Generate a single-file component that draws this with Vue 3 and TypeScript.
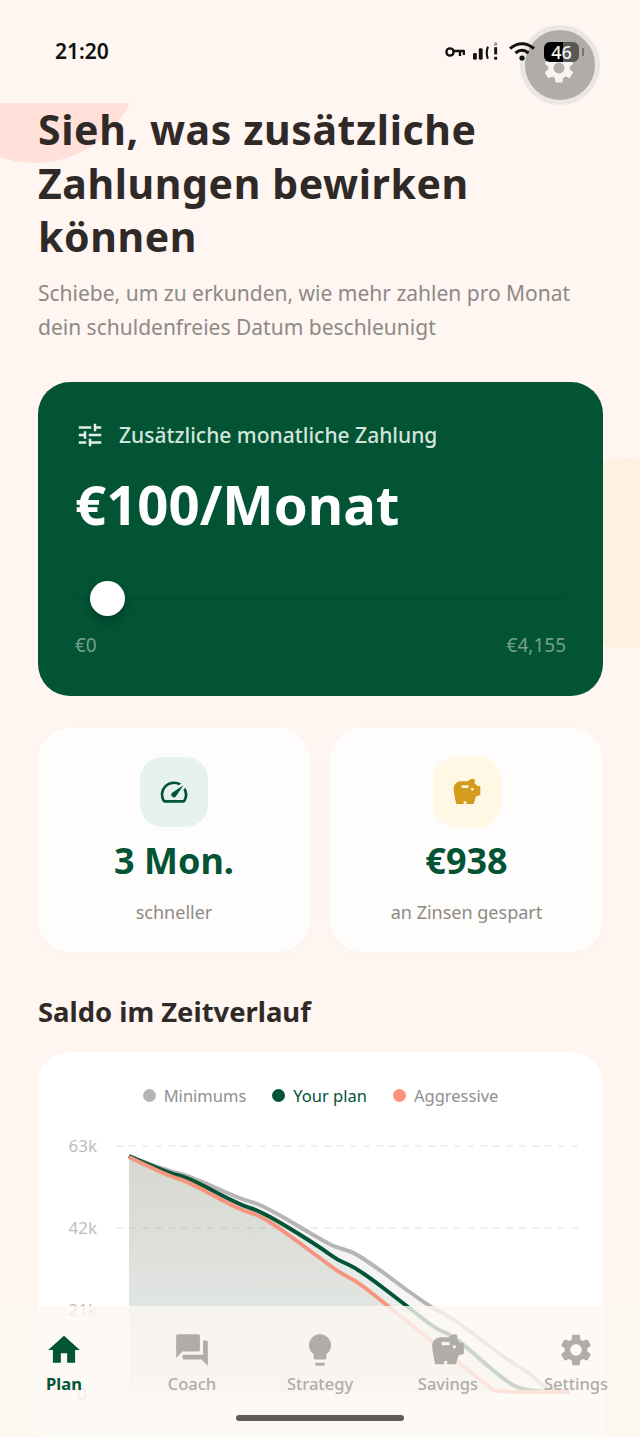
<script setup lang="ts">
type Series = { name: string; color: string; fill: string; points: [number, number][] };

const icons = {
  home: 'M10 20v-6h4v6h5v-8h3L12 3 2 12h3v8z',
  forum: 'M21 6h-2v9H6v2c0 .55.45 1 1 1h11l4 4V7c0-.55-.45-1-1-1zm-4 6V3c0-.55-.45-1-1-1H3c-.55 0-1 .45-1 1v14l4-4h10c.55 0 1-.45 1-1z',
  bulb: 'M9 21c0 .55.45 1 1 1h4c.55 0 1-.45 1-1v-1H9v1zm3-19C8.14 2 5 5.14 5 9c0 2.38 1.19 4.47 3 5.74V17c0 .55.45 1 1 1h6c.55 0 1-.45 1-1v-2.26c1.81-1.27 3-3.36 3-5.74 0-3.86-3.14-7-7-7z',
  piggy: 'M19.83 7.5l-2.27-2.27c.07-.42.18-.81.32-1.15.08-.18.12-.37.12-.58 0-.83-.67-1.5-1.5-1.5-1.64 0-3.09.79-4 2h-5C4.46 4 2 6.46 2 9.5S4 21 4 21h5.5v-2h2v2H17l1.68-5.59 3.32-1.11V7.5h-2.17zM13 9H8V7h5v2zm3 2c-.55 0-1-.45-1-1s.45-1 1-1 1 .45 1 1-.45 1-1 1z',
  gear: 'M19.14 12.94c.04-.3.06-.61.06-.94 0-.32-.02-.64-.07-.94l2.03-1.58c.18-.14.23-.41.12-.61l-1.92-3.32c-.12-.22-.37-.29-.59-.22l-2.39.96c-.5-.38-1.03-.7-1.62-.94l-.36-2.54c-.04-.24-.24-.41-.48-.41h-3.84c-.24 0-.43.17-.47.41l-.36 2.54c-.59.24-1.13.57-1.62.94l-2.39-.96c-.22-.08-.47 0-.59.22L2.74 8.87c-.12.21-.08.47.12.61l2.03 1.58c-.05.3-.09.63-.09.94s.02.64.07.94l-2.03 1.58c-.18.14-.23.41-.12.61l1.92 3.32c.12.22.37.29.59.22l2.39-.96c.5.38 1.03.7 1.62.94l.36 2.54c.05.24.24.41.48.41h3.84c.24 0 .44-.17.47-.41l.36-2.54c.59-.24 1.13-.56 1.62-.94l2.39.96c.22.08.47 0 .59-.22l1.92-3.32c.12-.22.07-.47-.12-.61l-2.01-1.58zM12 15.6c-1.98 0-3.6-1.62-3.6-3.6s1.62-3.6 3.6-3.6 3.6 1.62 3.6 3.6-1.62 3.6-3.6 3.6z',
  speed: 'M20.38 8.57l-1.23 1.85a8 8 0 0 1-.22 7.58H5.07A8 8 0 0 1 15.58 6.85l1.85-1.23A10 10 0 0 0 3.35 19a2 2 0 0 0 1.72 1h13.85a2 2 0 0 0 1.74-1 10 10 0 0 0-.27-10.44zm-9.79 6.84a2 2 0 0 0 2.83 0l5.66-8.49-8.49 5.66a2 2 0 0 0 0 2.83z',
  tune: 'M3 17v2h6v-2H3zM3 5v2h10V5H3zm10 16v-2h8v-2h-8v-2h-2v6h2zM7 9v2H3v2h4v2h2V9H7zm14 4v-2H11v2h10zm-6-4h2V7h4V5h-4V3h-2v6z',
};

const nav = [
  { label: 'Plan', icon: icons.home, active: true },
  { label: 'Coach', icon: icons.forum, active: false },
  { label: 'Strategy', icon: icons.bulb, active: false },
  { label: 'Savings', icon: icons.piggy, active: false },
  { label: 'Settings', icon: icons.gear, active: false },
];

const legend = [
  { label: 'Minimums', dot: '#b5b5b5', text: '#8f8f8f' },
  { label: 'Your plan', dot: '#035335', text: '#035335' },
  { label: 'Aggressive', dot: '#ff927c', text: '#8f8f8f' },
];

const grid = [
  { label: '63k', y: 1146 },
  { label: '42k', y: 1228 },
  { label: '21k', y: 1310 },
];

const baseY = 1392;

const series: Series[] = [
  {
    name: 'min', color: '#b5b5b5', fill: 'url(#fillGray)',
    points: [[129, 1156], [168, 1171], [187, 1175], [243, 1200], [263, 1205], [330, 1245], [340, 1248], [360, 1255], [428, 1306], [453, 1318], [507, 1360], [530, 1373], [547, 1390], [570, 1392]],
  },
  {
    name: 'plan', color: '#035335', fill: 'url(#fillGreen)',
    points: [[129, 1156], [168, 1173], [187, 1177], [240, 1205], [263, 1212], [320, 1247], [337, 1260], [357, 1268], [407, 1306], [437, 1330], [453, 1335], [507, 1383], [527, 1391], [570, 1392]],
  },
  {
    name: 'agg', color: '#f5957e', fill: 'url(#fillCoral)',
    points: [[129, 1157], [168, 1176], [187, 1181], [240, 1210], [263, 1216], [320, 1258], [340, 1273], [358, 1282], [388, 1306], [490, 1388], [497, 1392], [570, 1392]],
  },
];

// midpoint quadratic smoothing, enough to round the kinks
function linePath(pts: [number, number][]): string {
  let d = `M${pts[0][0]} ${pts[0][1]}`;
  for (let i = 1; i < pts.length - 1; i++) {
    const mx = (pts[i][0] + pts[i + 1][0]) / 2;
    const my = (pts[i][1] + pts[i + 1][1]) / 2;
    d += ` Q${pts[i][0]} ${pts[i][1]} ${mx} ${my}`;
  }
  const last = pts[pts.length - 1];
  return `${d} L${last[0]} ${last[1]}`;
}

function areaPath(pts: [number, number][]): string {
  const last = pts[pts.length - 1];
  return `${linePath(pts)} L${last[0]} ${baseY} L${pts[0][0]} ${baseY} Z`;
}
</script>

<template>
  <div class="page">
    <div class="status">
      <span class="time">21:20</span>
      <div class="status-icons">
        <svg class="key" width="20" height="12" viewBox="0 0 20 12" fill="none" stroke="#111" stroke-width="2.4">
          <ellipse cx="5" cy="6" rx="3.6" ry="3.6" />
          <path d="M8 5H19M15 5V10M19 4V9" />
        </svg>
        <svg class="signal" width="27" height="20" viewBox="0 0 28 20">
          <rect x="0" y="11" width="4" height="7" rx="1.5" />
          <rect x="6" y="6" width="4" height="12" rx="1.5" />
          <path d="M15.5 4.5Q13 11 15.5 17" fill="none" stroke="#111" stroke-width="2.2" />
          <rect x="22" y="0" width="3" height="3.5" fill="#999" />
          <rect x="22" y="5" width="3" height="7.5" />
          <rect x="22" y="15" width="3" height="3" />
        </svg>
        <svg class="wifi" width="28" height="20" viewBox="0 0 28 20" fill="none" stroke="#111" stroke-width="3">
          <path d="M2 6.5Q14 -3 26 6.5" />
          <path d="M7.5 11Q14 5.5 20.5 11" />
          <circle cx="14" cy="16" r="2.6" fill="#111" stroke="none" />
        </svg>
        <div class="battery"><span class="battery-num">46</span></div>
        <span class="battery-nub"></span>
      </div>
    </div>

    <div class="scroller">
      <div class="blob blob-pink"></div>
      <div class="blob blob-cream"></div>

      <h1 class="title">Sieh, was zusätzliche Zahlungen bewirken können</h1>
      <p class="sub">Schiebe, um zu erkunden, wie mehr zahlen pro Monat dein schuldenfreies Datum beschleunigt</p>

      <section class="slider-card">
        <div class="slider-head">
          <svg class="tune" viewBox="0 0 24 24"><path :d="icons.tune" /></svg>
          <span>Zusätzliche monatliche Zahlung</span>
        </div>
        <div class="amount">€100/Monat</div>
        <div class="track"><span class="thumb"></span></div>
        <div class="range"><span>€0</span><span>€4,155</span></div>
      </section>

      <div class="stats">
        <div class="stat">
          <div class="tile tile-green">
            <svg viewBox="0 0 24 24"><path :d="icons.speed" /></svg>
          </div>
          <div class="stat-value">3 Mon.</div>
          <div class="stat-label">schneller</div>
        </div>
        <div class="stat">
          <div class="tile tile-gold">
            <svg viewBox="0 0 24 24"><path :d="icons.piggy" /></svg>
          </div>
          <div class="stat-value">€938</div>
          <div class="stat-label">an Zinsen gespart</div>
        </div>
      </div>

      <h2 class="section-title">Saldo im Zeitverlauf</h2>

      <section class="chart-card">
        <div class="legend">
          <div v-for="l in legend" :key="l.label" class="legend-item" :style="{ color: l.text }">
            <span class="dot" :style="{ background: l.dot }"></span>{{ l.label }}
          </div>
        </div>
        <svg class="chart" viewBox="38 1120 565 300" width="565" height="300">
          <defs>
            <linearGradient id="fillGray" x1="0" y1="0" x2="0" y2="1">
              <stop offset="0" stop-color="#b5b5b5" stop-opacity="0.22" />
              <stop offset="1" stop-color="#b5b5b5" stop-opacity="0.06" />
            </linearGradient>
            <linearGradient id="fillGreen" x1="0" y1="0" x2="0" y2="1">
              <stop offset="0" stop-color="#035335" stop-opacity="0.07" />
              <stop offset="1" stop-color="#035335" stop-opacity="0.05" />
            </linearGradient>
            <linearGradient id="fillCoral" x1="0" y1="0" x2="0" y2="1">
              <stop offset="0" stop-color="#9a6a40" stop-opacity="0.1" />
              <stop offset="1" stop-color="#6a6a50" stop-opacity="0.04" />
            </linearGradient>
          </defs>
          <g v-for="g in grid" :key="g.label">
            <line x1="116" x2="583" :y1="g.y" :y2="g.y" stroke="#ececec" stroke-width="1.5" stroke-dasharray="7 6" />
            <text x="97" :y="g.y + 6" text-anchor="end" class="axis">{{ g.label }}</text>
          </g>
          <text x="87" y="1400" text-anchor="end" class="axis">0</text>
          <path v-for="s in series" :key="s.name + 'a'" :d="areaPath(s.points)" :fill="s.fill" />
          <path
            v-for="s in series"
            :key="s.name"
            :d="linePath(s.points)"
            fill="none"
            :stroke="s.color"
            stroke-width="4"
            stroke-linejoin="round"
          />
        </svg>
      </section>
    </div>

    <button class="fab">
      <svg viewBox="0 0 24 24"><path :d="icons.gear" /></svg>
    </button>

    <nav class="nav">
      <div class="nav-items">
        <div v-for="n in nav" :key="n.label" class="nav-item" :class="{ active: n.active }">
          <svg viewBox="0 0 24 24"><path :d="n.icon" /></svg>
          <span>{{ n.label }}</span>
        </div>
      </div>
      <div class="home-bar"></div>
    </nav>
  </div>
</template>

<style>
html, body {
  margin: 0;
  background: #fff5f1;
}
</style>

<style scoped>
.page {
  position: relative;
  width: 640px;
  height: 1437px;
  overflow: hidden;
  background: #fff5f1;
  font-family: "Noto Sans", "DejaVu Sans", sans-serif;
  color: #2f2a27;
}

.status {
  height: 103px;
  box-sizing: border-box;
  padding: 38px 56px 0 55px;
  display: flex;
  justify-content: space-between;
  align-items: flex-start;
  position: relative;
  z-index: 3;
}

.time {
  font-size: 21px;
  font-weight: 600;
  line-height: 26px;
  color: #111;
}

.status-icons {
  display: flex;
  align-items: center;
  height: 26px;
  margin-top: 1px;
}

.key {
  margin-right: 8px;
}

.signal {
  fill: #111;
  margin-right: 8px;
}

.wifi {
  margin-right: 8px;
}

.battery {
  width: 35px;
  height: 20px;
  border-radius: 6px;
  background: linear-gradient(90deg, #000 0 54%, #5a5855 54% 100%);
  display: flex;
  align-items: center;
  justify-content: center;
}

.battery-num {
  color: #f4f4f4;
  font-size: 18px;
  font-weight: 500;
  line-height: 20px;
}

.battery-nub {
  width: 2px;
  height: 8px;
  margin-left: 3px;
  background: #777;
}

.scroller {
  position: relative;
  height: 1334px;
  overflow: hidden;
  padding: 0 37px 0 38px;
}

.blob {
  position: absolute;
  border-radius: 50%;
}

.blob-pink {
  left: -70px;
  top: -150px;
  width: 210px;
  height: 210px;
  background: #ffe1da;
}

.blob-cream {
  left: 530px;
  top: 355px;
  width: 190px;
  height: 190px;
  background: #fff1e2;
}

.title {
  position: relative;
  margin: 0;
  font-size: 41px;
  font-weight: 700;
  letter-spacing: 0.6px;
  line-height: 53.5px;
  color: #2f2a27;
}

.sub {
  position: relative;
  margin: 12px 0 0;
  font-size: 21px;
  line-height: 34px;
  color: #8d8a86;
}

.slider-card {
  position: relative;
  margin-top: 38px;
  height: 314px;
  box-sizing: border-box;
  padding: 37px 37px 0;
  background: #035335;
  border-radius: 32px;
  color: #fff;
}

.slider-head {
  display: flex;
  align-items: center;
  gap: 14px;
  font-size: 21px;
  font-weight: 500;
  line-height: 32px;
  color: #d3e5dc;
}

.tune {
  width: 30px;
  height: 30px;
  fill: #e4efe9;
}

.amount {
  margin-top: 18px;
  font-size: 54.5px;
  font-weight: 700;
  line-height: 70px;
}

.track {
  position: relative;
  margin-top: 59px;
  height: 2px;
  background: rgba(0, 0, 0, 0.03);
}

.thumb {
  position: absolute;
  left: 15px;
  top: -17px;
  width: 35px;
  height: 35px;
  border-radius: 50%;
  background: #fff;
  box-shadow: 0 5px 10px rgba(0, 0, 0, 0.22);
}

.range {
  display: flex;
  justify-content: space-between;
  margin-top: 33px;
  font-size: 19px;
  line-height: 24px;
  color: rgba(255, 255, 255, 0.45);
}

.stats {
  position: relative;
  display: grid;
  grid-template-columns: 272px 273px;
  gap: 20px;
  margin-top: 32px;
}

.stat {
  height: 224px;
  box-sizing: border-box;
  padding-top: 29px;
  background: #fffdfc;
  border-radius: 32px;
  display: flex;
  flex-direction: column;
  align-items: center;
  box-shadow: 0 2px 12px rgba(120, 80, 60, 0.02);
}

.tile {
  width: 68px;
  height: 70px;
  border-radius: 22px;
  display: grid;
  place-items: center;
}

.tile svg {
  width: 32px;
  height: 32px;
}

.tile-green {
  background: #e6f2ee;
  fill: #035335;
}

.tile-gold {
  background: #fff8e4;
  fill: #d49b1f;
}

.stat-value {
  margin-top: 9px;
  font-size: 36px;
  font-weight: 700;
  line-height: 50px;
  color: #035335;
}

.stat-label {
  margin-top: 13px;
  font-size: 18px;
  line-height: 26px;
  color: #8d8a86;
}

.section-title {
  position: relative;
  margin: 40px 0 0;
  font-size: 27.4px;
  font-weight: 700;
  line-height: 40px;
  color: #2f2a27;
}

.chart-card {
  position: relative;
  margin-top: 20px;
  height: 440px;
  background: #fff;
  border-radius: 32px;
}

.legend {
  display: flex;
  justify-content: center;
  gap: 26px;
  padding-top: 32px;
  font-size: 16.5px;
  line-height: 24px;
}

.legend-item {
  display: flex;
  align-items: center;
  gap: 8px;
}

.dot {
  width: 13px;
  height: 13px;
  border-radius: 50%;
}

.chart {
  display: block;
  margin-top: 12px;
}

.axis {
  font-size: 17px;
  fill: #bdbdbd;
}

.fab {
  position: absolute;
  left: 520px;
  top: 25px;
  width: 80px;
  height: 80px;
  box-sizing: border-box;
  padding: 0;
  border: 5px solid #e9e6e3;
  border-radius: 50%;
  background: #b0acaa;
  display: grid;
  place-items: center;
  z-index: 2;
}

.fab svg {
  width: 36px;
  height: 36px;
  margin-top: 6px;
  margin-left: -2px;
  fill: #f6f4f2;
}

.nav {
  position: absolute;
  left: 0;
  right: 0;
  bottom: 0;
  height: 131px;
  background: rgba(252, 247, 243, 0.8);
  z-index: 4;
}

.nav-items {
  display: grid;
  grid-template-columns: repeat(5, 1fr);
  padding-top: 25px;
}

.nav-item {
  display: flex;
  flex-direction: column;
  align-items: center;
  font-size: 16.5px;
  font-weight: 500;
  line-height: 22px;
  color: #b0aca8;
  fill: #b0aca8;
}

.nav-item svg {
  width: 38px;
  height: 38px;
  margin-bottom: 4px;
}

.nav-item.active {
  color: #035335;
  fill: #035335;
  font-weight: 700;
}

.home-bar {
  position: absolute;
  left: 236px;
  top: 109px;
  width: 168px;
  height: 6px;
  border-radius: 3px;
  background: #5e5a58;
}
</style>
